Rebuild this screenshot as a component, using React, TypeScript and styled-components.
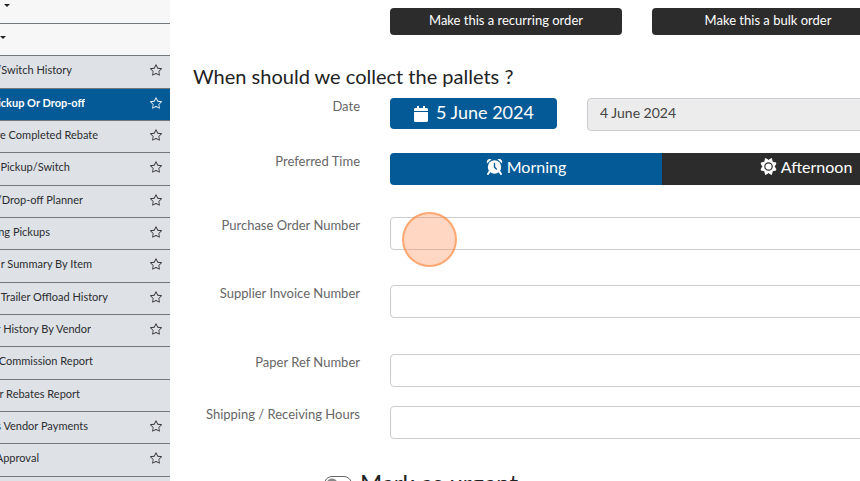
import React from "react";
import styled, { createGlobalStyle } from "styled-components";
import { FaCalendar } from "react-icons/fa";
import { BsStar } from "react-icons/bs";

const GlobalStyle = createGlobalStyle`
  *, *::before, *::after { box-sizing: border-box; }
  body {
    margin: 0;
    background: #fff;
    color: #222;
    font-family: Lato, "Open Sans", sans-serif;
    overflow: hidden;
  }
  button, input { font-family: inherit; }
`;

const Page = styled.div`
  display: flex;
  height: 100vh;
  overflow: hidden;
`;

const Sidebar = styled.nav`
  flex: 0 0 170px;
  background: #dee1e6;
  overflow: hidden;
`;

const GroupToggle = styled.button<{ $height: number; $indent: number }>`
  display: flex;
  align-items: flex-start;
  width: 100%;
  height: ${(p) => p.$height}px;
  padding: ${(p) => p.$height - 20}px 0 0 ${(p) => p.$indent}px;
  border: 0;
  border-bottom: 1px solid #72777c;
  background: #f7f7f7;
`;

const Caret = styled.span`
  border: 3px solid transparent;
  border-top-color: #222;
  border-bottom: 0;
`;

const Menu = styled.ul`
  margin: 0;
  padding: 0;
  list-style: none;
`;

const MenuItem = styled.li<{ $active?: boolean }>`
  display: flex;
  align-items: center;
  justify-content: space-between;
  height: 32px;
  padding: 0 8px 4px 0;
  border-bottom: 1px solid #72777c;
  background: ${(p) => (p.$active ? "#045a96" : "transparent")};
  color: ${(p) => (p.$active ? "#fff" : "#2b2d30")};
  font-weight: ${(p) => (p.$active ? 700 : 400)};
  &:nth-child(3n + 1) { height: 33px; }
`;

const MenuLink = styled.a<{ $width: number }>`
  display: flex;
  justify-content: flex-end;
  width: ${(p) => p.$width}px;
  overflow: hidden;
  color: inherit;
  font-size: 11px;
  line-height: 16px;
  text-decoration: none;
  white-space: pre;
`;

const StarButton = styled.button`
  display: flex;
  padding: 0;
  border: 0;
  background: none;
  color: inherit;
  font-size: 12px;
`;

const Main = styled.main`
  flex: 1;
  min-width: 0;
  padding: 8px 0 0 23px;
  overflow: hidden;
`;

const OrderActions = styled.div`
  display: flex;
  gap: 30px;
  margin-left: 197px;
`;

const DarkButton = styled.button`
  flex: 0 0 232px;
  height: 27px;
  padding: 0 0 3px;
  border: 0;
  border-radius: 4px;
  background: #2c2c2c;
  color: #fff;
  font-size: 13px;
  line-height: 16px;
`;

const Heading = styled.h2`
  margin: 27px 0 8px;
  font-size: 20px;
  font-weight: 400;
  line-height: 28px;
`;

const Field = styled.div<{ $gap: number }>`
  display: grid;
  grid-template-columns: 167px 1fr;
  column-gap: 30px;
  align-items: start;
  min-height: 32px;
  margin: 0 -90px ${(p) => p.$gap}px 0;
`;

const Label = styled.label`
  color: #666;
  font-size: 13px;
  line-height: 16px;
  text-align: right;
  white-space: nowrap;
`;

const TextInput = styled.input`
  width: 100%;
  min-width: 0;
  height: 33px;
  padding: 0 12px 4px;
  border: 1px solid #c9ccd0;
  border-radius: 4px;
  background: #fff;
  color: #444;
  font-size: 14px;
  &:disabled { background: #ececec; }
`;

const DateControls = styled.div`
  display: grid;
  grid-template-columns: 167px 1fr;
  column-gap: 30px;
`;

const DateButton = styled.button`
  display: flex;
  align-items: center;
  justify-content: center;
  gap: 7px;
  height: 31px;
  padding: 0 0 4px;
  border: 0;
  border-radius: 4px;
  background: #045a96;
  color: #fff;
  font-size: 18px;
  line-height: 20px;
  svg { font-size: 16px; margin-top: 4px; }
`;

const TimeGroup = styled.div`
  display: flex;
  border-radius: 4px;
  overflow: hidden;
`;

const TimeButton = styled.button<{ $selected?: boolean }>`
  flex: ${(p) => (p.$selected ? "0 0 272px" : "1")};
  display: flex;
  align-items: center;
  justify-content: center;
  gap: 4px;
  height: 32px;
  padding: 0 0 5px;
  border: 0;
  background: ${(p) => (p.$selected ? "#045a96" : "#2c2c2c")};
  color: #fff;
  font-size: 16px;
`;

const PointerArea = styled.div`
  position: relative;
`;

const ClickMarker = styled.span`
  position: absolute;
  top: -5px;
  left: 12px;
  width: 55px;
  height: 55px;
  border: 2px solid rgba(255, 140, 70, 0.65);
  border-radius: 50%;
  background: rgba(255, 145, 85, 0.36);
  pointer-events: none;
`;

const UrgentLabel = styled.label`
  display: flex;
  align-items: flex-start;
  gap: 8px;
  margin: 30px 0 0 131px;
  font-size: 24px;
  line-height: 28px;
`;

const Switch = styled.input`
  appearance: none;
  width: 28px;
  height: 16px;
  margin: 7px 0 0;
  border: 1px solid #666;
  border-radius: 8px;
  background: radial-gradient(circle at 7px 7px, #888 5px, transparent 6px);
`;

function AlarmIcon() {
  return (
    <svg width="17" height="17" viewBox="0 0 17 17" fill="none" aria-hidden="true">
      <path d="M1 5.5C0 2 2.5 0.2 5.5 1.2L1 5.5ZM16 5.5C17 2 14.500 0.2 11.500 1.2L16 5.5Z" fill="currentColor" />
      <circle cx="8.500" cy="9" r="6.700" fill="currentColor" />
      <path d="M4 13L2 16M13 13L15 16" stroke="currentColor" strokeWidth="2" strokeLinecap="round" />
      <path d="M8.500 5.500V9L10.300 11" stroke="#045a96" strokeWidth="1.400" strokeLinecap="round" strokeLinejoin="round" />
    </svg>
  );
}

function SunIcon() {
  return (
    <svg width="17" height="17" viewBox="0 0 17 17" fill="none" aria-hidden="true">
      <path
        d="M8.500 2.300L11.500 0.500L12.300 4.200L16 5L14.400 8.500L16 12L12.300 12.800L11.500 16.500L8.500 14.700L5.500 16.500L4.700 12.800L1 12L2.600 8.500L1 5L4.700 4.200L5.500 0.500Z"
        fill="currentColor"
        stroke="currentColor"
        strokeLinejoin="round"
      />
      <circle cx="8.500" cy="8.500" r="3.700" stroke="#2c2c2c" strokeWidth="1.200" />
    </svg>
  );
}

type Item = { text: string; end: number; active?: boolean; star?: boolean };

const items: Item[] = [
  { text: "/Switch History", end: 72, star: true },
  { text: "Pickup Or Drop-off", end: 85, active: true, star: true },
  { text: "re Completed Rebate", end: 98, star: true },
  { text: "Pickup/Switch", end: 70, star: true },
  { text: "/Drop-off Planner", end: 83, star: true },
  { text: "ng Pickups", end: 50, star: true },
  { text: "r Summary By Item", end: 92, star: true },
  { text: "r Trailer Offload History", end: 108, star: true },
  { text: "r History By Vendor", end: 91, star: true },
  { text: "Commission Report", end: 93 },
  { text: "r Rebates Report", end: 80 },
  { text: "s Vendor Payments", end: 88, star: true },
  { text: "Approval", end: 39, star: true },
];

function TextField({ id, label, gap, marked }: { id: string; label: string; gap: number; marked?: boolean }) {
  return (
    <Field $gap={gap}>
      <Label htmlFor={id}>{label}</Label>
      <PointerArea>
        <TextInput id={id} type="text" />
        {marked && <ClickMarker />}
      </PointerArea>
    </Field>
  );
}

export default function App() {
  return (
    <>
      <GlobalStyle />
      <Page>
        <Sidebar aria-label="Reports">
          <GroupToggle $height={24} $indent={4} aria-label="Expand group"><Caret /></GroupToggle>
          <GroupToggle $height={32} $indent={0} aria-label="Expand group"><Caret /></GroupToggle>
          <Menu>
            {items.map((item) => (
              <MenuItem key={item.text} $active={item.active}>
                <MenuLink href="#" $width={item.end}>{item.text}</MenuLink>
                {item.star && <StarButton aria-label={`Favourite ${item.text}`}><BsStar /></StarButton>}
              </MenuItem>
            ))}
          </Menu>
        </Sidebar>
        <Main>
          <OrderActions>
            <DarkButton>Make this a recurring order</DarkButton>
            <DarkButton>Make this a bulk order</DarkButton>
          </OrderActions>
          <Heading>When should we collect the pallets ?</Heading>
          <Field $gap={22}>
            <Label htmlFor="date">Date</Label>
            <DateControls>
              <DateButton id="date"><FaCalendar />5 June 2024</DateButton>
              <TextInput type="text" aria-label="Earliest date" defaultValue="4 June 2024" disabled />
            </DateControls>
          </Field>
          <Field $gap={32}>
            <Label as="span" id="time-label">Preferred Time</Label>
            <TimeGroup role="group" aria-labelledby="time-label">
              <TimeButton $selected aria-pressed="true"><AlarmIcon />Morning</TimeButton>
              <TimeButton aria-pressed="false"><SunIcon />Afternoon</TimeButton>
            </TimeGroup>
          </Field>
          <TextField id="po" label="Purchase Order Number" gap={35} marked />
          <TextField id="invoice" label="Supplier Invoice Number" gap={36} />
          <TextField id="paper" label="Paper Ref Number" gap={19} />
          <TextField id="hours" label="Shipping / Receiving Hours" gap={0} />
          <UrgentLabel><Switch type="checkbox" role="switch" />Mark as urgent</UrgentLabel>
        </Main>
      </Page>
    </>
  );
}
